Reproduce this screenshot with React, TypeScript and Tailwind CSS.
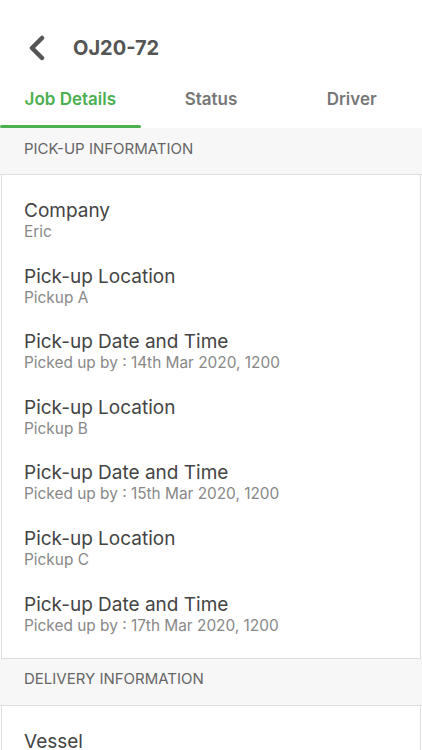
const pickups = [
  { title: "Company", value: "Eric" },
  { title: "Pick-up Location", value: "Pickup A" },
  { title: "Pick-up Date and Time", value: "Picked up by : 14th Mar 2020, 1200" },
  { title: "Pick-up Location", value: "Pickup B" },
  { title: "Pick-up Date and Time", value: "Picked up by : 15th Mar 2020, 1200" },
  { title: "Pick-up Location", value: "Pickup C" },
  { title: "Pick-up Date and Time", value: "Picked up by : 17th Mar 2020, 1200" },
];

const deliveries = [{ title: "Vessel", value: "" }];

function Section({ label, items }: { label: string; items: { title: string; value: string }[] }) {
  return (
    <div>
      <div className="h-[47px] flex items-center pb-[4px] px-6 bg-[#f7f7f7] border-b border-[#dedede]">
        <span className="text-[15px] text-[#666]">{label}</span>
      </div>
      <div className="mx-px border-x border-b border-[#dedede] bg-white px-[22px] pt-[24px] pb-[23px] flex flex-col gap-[23.6px]">
        {items.map((item, i) => (
          <div key={i}>
            <div className="text-[19px] leading-[24px] text-[#444]">{item.title}</div>
            <div className="text-[15.4px] leading-[18px] text-[#888]">{item.value}</div>
          </div>
        ))}
      </div>
    </div>
  );
}

export default function App() {
  const tabs = ["Job Details", "Status", "Driver"];
  return (
    <div className="w-[422px] h-[750px] overflow-hidden bg-white font-['Inter',sans-serif]">
      {/* Header */}
      <div className="h-[76px] pt-5 flex items-center">
        <svg width="20" height="26" viewBox="0 0 20 26" className="ml-[27px]">
          <polyline points="15,3 5,13 15,23" fill="none" stroke="#555" strokeWidth="4.5" strokeLinecap="round" strokeLinejoin="round" />
        </svg>
        <span className="ml-[26px] text-[20px] font-bold text-[#555]">OJ20-72</span>
      </div>

      {/* Tabs */}
      <div className="h-[52px] flex">
        {tabs.map((t, i) => (
          <div key={t} className="flex-1 flex flex-col">
            <div className={`flex-1 flex items-center justify-center pb-[2px] text-[17px] font-semibold ${i === 0 ? "text-[#4caf50]" : "text-[#777]"}`}>
              {t}
            </div>
            <div className={`h-[3px] rounded-full ${i === 0 ? "bg-[#4caf50]" : "bg-transparent"}`}></div>
          </div>
        ))}
      </div>

      <Section label="PICK-UP INFORMATION" items={pickups} />
      <Section label="DELIVERY INFORMATION" items={deliveries} />
    </div>
  );
}
